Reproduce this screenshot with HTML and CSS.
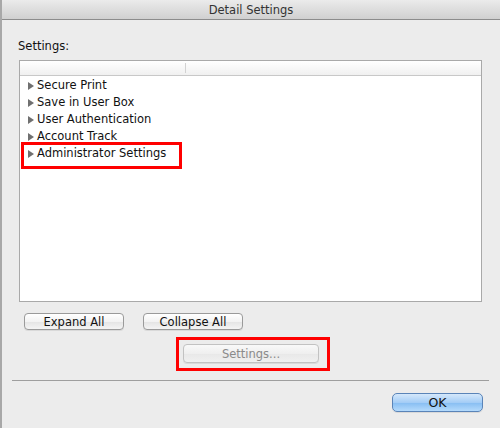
FILE: index.html
```html
<!DOCTYPE html>
<html>
  <head>
    <title>Detail Settings</title>
    <link rel="stylesheet" href="styles.css">
  </head>
  <body>
    <div class="window">
      <div class="titlebar">Detail Settings</div>
      <div class="label">Settings:</div>
      <div class="list">
        <div class="list-header">
          <div class="col col-first"></div>
          <div class="col"></div>
        </div>
        <div class="row"><span class="arrow"></span>Secure Print</div>
        <div class="row"><span class="arrow"></span>Save in User Box</div>
        <div class="row"><span class="arrow"></span>User Authentication</div>
        <div class="row"><span class="arrow"></span>Account Track</div>
        <div class="row"><span class="arrow"></span>Administrator Settings</div>
        <!-- red annotation box over the last row -->
        <div class="mark mark-row"></div>
      </div>
      <div class="tree-buttons">
        <button class="btn btn-expand">Expand All</button>
        <button class="btn btn-collapse">Collapse All</button>
      </div>
      <div class="settings-wrap">
        <div class="mark-box">
          <button class="btn btn-settings" disabled>Settings...</button>
        </div>
      </div>
      <div class="separator"></div>
      <div class="footer">
        <button class="btn btn-ok">OK</button>
      </div>
    </div>
  </body>
</html>
```

FILE: styles.css
```css
body {
  margin: 0;
  font-family: "DejaVu Sans", "Liberation Sans", sans-serif;
  font-size: 11.5px;
  color: #111;
  background-color: #ececec;
}
.window {
  height: 428px;
  box-sizing: border-box;
  border-left: 2px solid #a8a8a8;
  background-color: #ececec;
  display: flex;
  flex-direction: column;
}
.titlebar {
  height: 19px;
  line-height: 20px;
  text-align: center;
  color: #333;
  font-size: 11.5px;
  background: linear-gradient(#ebebeb, #d0d0d0);
  border-bottom: 1px solid #8c8c8c;
}
.label {
  margin: 19px 0 0 16px;
  height: 14px;
  line-height: 14px;
}
.list {
  position: relative;
  margin: 7px 0 0 17px;
  width: 463px;
  height: 242px;
  box-sizing: border-box;
  border: 1px solid #a9a9a9;
  background-color: #fff;
}
.list-header {
  display: flex;
  height: 13px;
  background: linear-gradient(#ffffff, #f0f0f0);
  border-bottom: 1px solid #c8c8c8;
  padding-top: 1px;
  margin-bottom: 1px;
}
.col {
  flex: 1;
}
.col-first {
  flex: none;
  width: 165px;
  border-right: 1px solid #d2d2d2;
  margin: 1px 0 2px;
}
.row {
  height: 17px;
  line-height: 17px;
  padding-left: 8px;
  display: flex;
  align-items: center;
}
.arrow {
  width: 0;
  height: 0;
  border-top: 4px solid transparent;
  border-bottom: 4px solid transparent;
  border-left: 6px solid #707070;
  margin-right: 3px;
}
.mark {
  position: absolute;
  border: 3px solid #f00;
}
.mark-row {
  left: 1px;
  top: 81px;
  width: 155px;
  height: 21px;
}
.tree-buttons {
  display: flex;
  gap: 19px;
  margin: 11px 0 0 22px;
}
.btn {
  font-family: "DejaVu Sans", "Liberation Sans", sans-serif;
  font-size: 11.5px;
  color: #111;
  box-sizing: border-box;
  padding: 0;
  border: 1px solid #9a9a9a;
  border-radius: 4px;
  background: linear-gradient(#ffffff, #f3f3f3 50%, #e4e4e4 51%, #f4f4f4);
  box-shadow: 0 1px 0 rgba(0, 0, 0, 0.08);
}
.btn-expand {
  width: 100px;
  height: 17px;
}
.btn-collapse {
  width: 100px;
  height: 17px;
}
.settings-wrap {
  display: flex;
  margin-top: 7px;
  padding-left: 174px;
}
.mark-box {
  border: 3px solid #f00;
  padding: 4px 8px 5px 4px;
}
.btn-settings {
  width: 136px;
  height: 19px;
  color: #8a8a8a;
  border-color: #c2c2c2;
  background: linear-gradient(#f9f9f9, #efefef 50%, #e8e8e8 51%, #f0f0f0);
}
.separator {
  margin: 9px 0 0 10px;
  width: 477px;
  height: 1px;
  background-color: #9e9e9e;
}
.footer {
  margin: 12px 0 0 390px;
}
.btn-ok {
  width: 91px;
  height: 19px;
  font-size: 12.5px;
  border-color: #5a84b8;
  border-radius: 5px;
  background: linear-gradient(#d5e8fb, #a4cdf6 50%, #86bdf2 51%, #b4dafc);
}
```
